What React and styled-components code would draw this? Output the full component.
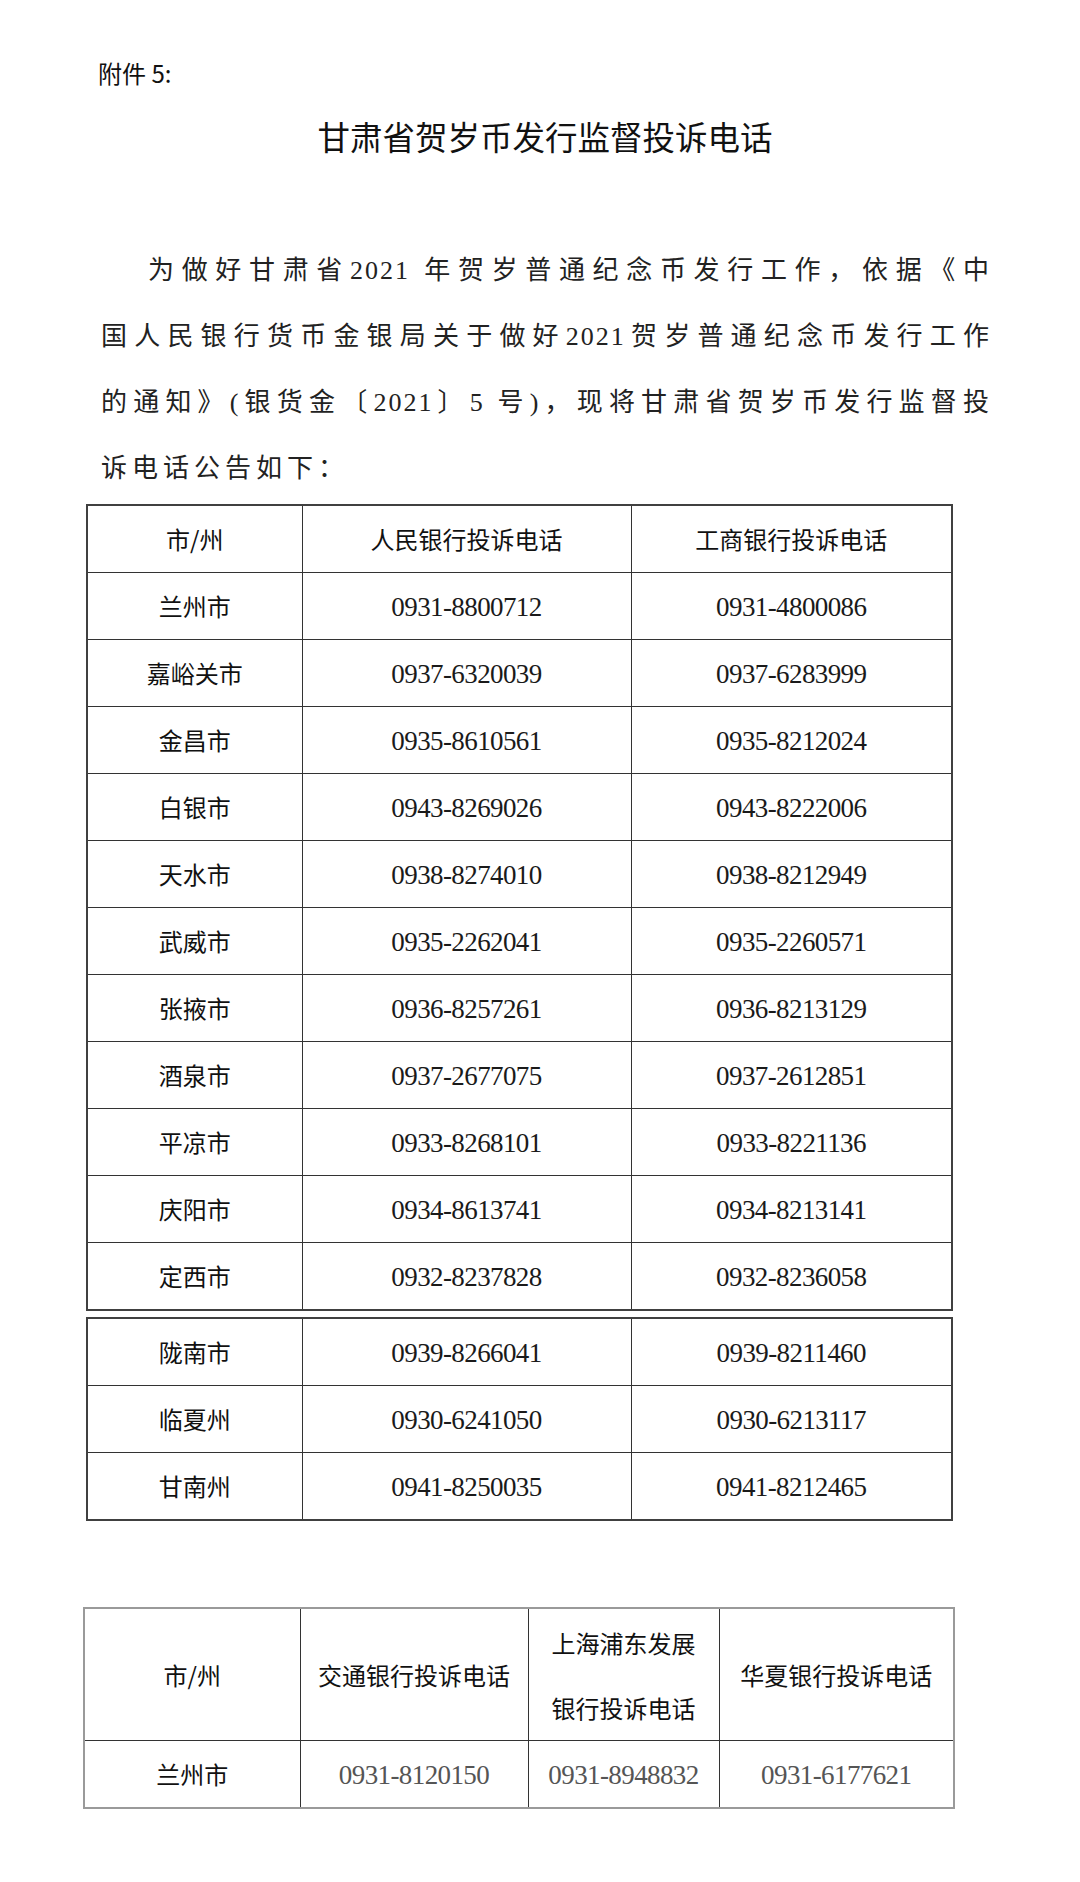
import React from 'react';
import styled, { createGlobalStyle } from 'styled-components';

const GlobalStyle = createGlobalStyle`
  html, body {
    margin: 0;
    padding: 0;
    background: #fff;
  }
  body {
    font-family: "Noto Sans CJK SC", "Noto Sans", sans-serif;
    color: #111;
  }
`;

const SANS = `"Noto Sans CJK SC", "Noto Sans", sans-serif`;
const SERIF = `"Liberation Serif", "Noto Sans CJK SC", serif`;

const Page = styled.div`
  width: 1080px;
  height: 1882px;
  box-sizing: border-box;
  padding-top: 58px;
  overflow: hidden;
`;

const Attachment = styled.div`
  margin-left: 98px;
  font-family: ${SANS};
  font-size: 24px;
  line-height: 30px;
  color: #111;
`;

const Title = styled.h1`
  margin: 28px 0 0 0;
  padding-left: 10px;
  text-align: center;
  font-family: ${SANS};
  font-weight: 400;
  font-size: 32.5px;
  line-height: 40px;
  color: #111;
`;

const Paragraph = styled.div`
  margin: 82px 0 0 101px;
  width: 890px;
  font-family: ${SERIF};
  font-size: 26px;
  color: #222;
`;

const Line = styled.div`
  height: 66px;
  line-height: 66px;
  white-space: nowrap;
  letter-spacing: ${(p) => (p.$last ? '5px' : '2px')};
  text-align: justify;
  text-align-last: ${(p) => (p.$last ? 'left' : 'justify')};
  padding-left: ${(p) => (p.$indent ? '47px' : '0')};
`;

const Table = styled.table`
  border-collapse: collapse;
  table-layout: fixed;
  margin-left: ${(p) => p.$left}px;
  margin-top: ${(p) => p.$top}px;
  border: 2px solid ${(p) => (p.$light ? '#9a9a9a' : '#404040')};
`;

const Cell = styled.td`
  padding: 0;
  height: ${(p) => p.$h || 66}px;
  border: 1px solid #333;
  text-align: center;
  vertical-align: middle;
  font-family: ${SANS};
  font-size: 24px;
  line-height: ${(p) => (p.$tall ? '65px' : '30px')};
  color: #111;
`;

const Phone = styled.span`
  font-family: "Liberation Serif", serif;
  font-size: 27px;
  letter-spacing: -0.6px;
  color: ${(p) => (p.$grey ? '#555' : '#1a1a1a')};
`;

const upper = [
  ['兰州市', '0931-8800712', '0931-4800086'],
  ['嘉峪关市', '0937-6320039', '0937-6283999'],
  ['金昌市', '0935-8610561', '0935-8212024'],
  ['白银市', '0943-8269026', '0943-8222006'],
  ['天水市', '0938-8274010', '0938-8212949'],
  ['武威市', '0935-2262041', '0935-2260571'],
  ['张掖市', '0936-8257261', '0936-8213129'],
  ['酒泉市', '0937-2677075', '0937-2612851'],
  ['平凉市', '0933-8268101', '0933-8221136'],
  ['庆阳市', '0934-8613741', '0934-8213141'],
  ['定西市', '0932-8237828', '0932-8236058'],
];

const lower = [
  ['陇南市', '0939-8266041', '0939-8211460'],
  ['临夏州', '0930-6241050', '0930-6213117'],
  ['甘南州', '0941-8250035', '0941-8212465'],
];

const ThreeCols = () => (
  <colgroup>
    <col style={{ width: 215 }} />
    <col style={{ width: 329 }} />
    <col style={{ width: 321 }} />
  </colgroup>
);

const CityRows = ({ rows }) =>
  rows.map((r) => (
    <tr key={r[0]}>
      <Cell>{r[0]}</Cell>
      <Cell><Phone>{r[1]}</Phone></Cell>
      <Cell><Phone>{r[2]}</Phone></Cell>
    </tr>
  ));

const App = () => {
  return (
    <Page>
      <GlobalStyle />
      <Attachment>附件 5:</Attachment>
      <Title>甘肃省贺岁币发行监督投诉电话</Title>

      <Paragraph>
        <Line $indent>为做好甘肃省2021 年贺岁普通纪念币发行工作，依据《中</Line>
        <Line>国人民银行货币金银局关于做好2021贺岁普通纪念币发行工作</Line>
        <Line>的通知》(银货金〔2021〕5 号)，现将甘肃省贺岁币发行监督投</Line>
        <Line $last>诉电话公告如下：</Line>
      </Paragraph>

      <Table $left={86} $top={2}>
        <ThreeCols />
        <tbody>
          <tr>
            <Cell>市/州</Cell>
            <Cell>人民银行投诉电话</Cell>
            <Cell>工商银行投诉电话</Cell>
          </tr>
          <CityRows rows={upper} />
        </tbody>
      </Table>

      <Table $left={86} $top={6}>
        <ThreeCols />
        <tbody>
          <CityRows rows={lower} />
        </tbody>
      </Table>

      <Table $left={83} $top={86} $light>
        <colgroup>
          <col style={{ width: 216 }} />
          <col style={{ width: 228 }} />
          <col style={{ width: 191 }} />
          <col style={{ width: 235 }} />
        </colgroup>
        <tbody>
          <tr>
            <Cell $h={131}>市/州</Cell>
            <Cell $h={131}>交通银行投诉电话</Cell>
            <Cell $h={131} $tall>
              上海浦东发展
              <br />
              银行投诉电话
            </Cell>
            <Cell $h={131}>华夏银行投诉电话</Cell>
          </tr>
          <tr>
            <Cell>兰州市</Cell>
            <Cell><Phone $grey>0931-8120150</Phone></Cell>
            <Cell><Phone $grey>0931-8948832</Phone></Cell>
            <Cell><Phone $grey>0931-6177621</Phone></Cell>
          </tr>
        </tbody>
      </Table>
    </Page>
  );
};

export default App;
